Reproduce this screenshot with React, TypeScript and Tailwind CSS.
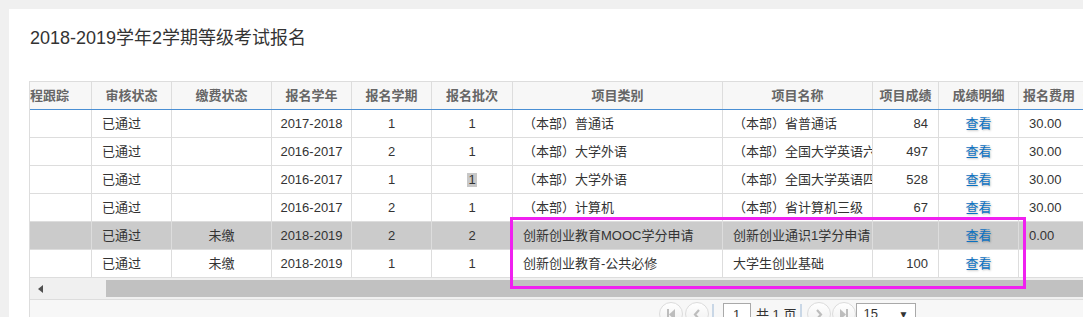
import React from 'react';

interface Row {
  audit: string;
  pay: string;
  year: string;
  term: string;
  batch: string;
  category: string;
  name: string;
  score: string;
  fee: string;
  selected?: boolean;
  markBatch?: boolean;
}

const rows: Row[] = [
  { audit: '已通过', pay: '', year: '2017-2018', term: '1', batch: '1', category: '（本部）普通话', name: '（本部）省普通话', score: '84', fee: '30.00' },
  { audit: '已通过', pay: '', year: '2016-2017', term: '2', batch: '1', category: '（本部）大学外语', name: '（本部）全国大学英语六级', score: '497', fee: '30.00' },
  { audit: '已通过', pay: '', year: '2016-2017', term: '1', batch: '1', category: '（本部）大学外语', name: '（本部）全国大学英语四级', score: '528', fee: '30.00', markBatch: true },
  { audit: '已通过', pay: '', year: '2016-2017', term: '2', batch: '1', category: '（本部）计算机', name: '（本部）省计算机三级', score: '67', fee: '30.00' },
  { audit: '已通过', pay: '未缴', year: '2018-2019', term: '2', batch: '2', category: '创新创业教育MOOC学分申请', name: '创新创业通识1学分申请', score: '', fee: '0.00', selected: true },
  { audit: '已通过', pay: '未缴', year: '2018-2019', term: '1', batch: '1', category: '创新创业教育-公共必修', name: '大学生创业基础', score: '100', fee: '' },
];

const cell = 'h-full shrink-0 border-r border-[#dddddd] flex items-center overflow-hidden whitespace-nowrap';

function PagerButton({ children }: { children: React.ReactNode }) {
  return (
    <div className="w-[24px] h-[24px] rounded-full border border-[#dcdcdc] bg-gradient-to-b from-white to-[#efefef] flex items-center justify-center shrink-0">
      {children}
    </div>
  );
}

export default function App() {
  return (
    <div
      className="w-[1083px] h-[317px] overflow-hidden bg-[#f0f0f0] pl-[9px] pt-[9px] text-[#333333]"
      style={{ fontFamily: '"Liberation Sans", "Noto Sans CJK SC", sans-serif' }}
    >
      <div className="bg-white h-[308px] pl-[20px] pt-[17px] overflow-hidden">
        <h1 className="text-[18px] leading-[24px] pl-[1px] text-[#333333]">2018-2019学年2学期等级考试报名</h1>

        <div className="relative mt-[31px] w-[1120px] border-l border-t border-[#dddddd] text-[13px]">
          {/* header */}
          <div className="flex h-[28px] bg-[#f7f7f7] border-b border-[#4a8fd4] text-[#666666] font-bold">
            <div className={`${cell} w-[62px]`}>程跟踪</div>
            <div className={`${cell} w-[80px] justify-center`}>审核状态</div>
            <div className={`${cell} w-[100px] justify-center`}>缴费状态</div>
            <div className={`${cell} w-[80px] justify-center`}>报名学年</div>
            <div className={`${cell} w-[80px] justify-center`}>报名学期</div>
            <div className={`${cell} w-[81px] justify-center`}>报名批次</div>
            <div className={`${cell} w-[210px] justify-center`}>项目类别</div>
            <div className={`${cell} w-[150px] justify-center`}>项目名称</div>
            <div className={`${cell} w-[66px] justify-center`}>项目成绩</div>
            <div className={`${cell} w-[80px] justify-center`}>成绩明细</div>
            <div className={`${cell} w-[120px] pl-[4px]`}>报名费用（元）</div>
          </div>

          {/* body */}
          {rows.map((r, i) => (
            <div key={i} className={`flex h-[28px] border-b border-[#dddddd] ${r.selected ? 'bg-[#cbcbcb]' : 'bg-white'}`}>
              <div className={`${cell} w-[62px]`} />
              <div className={`${cell} w-[80px] pl-[10px]`}>{r.audit}</div>
              <div className={`${cell} w-[100px] justify-center`}>{r.pay}</div>
              <div className={`${cell} w-[80px] justify-center`}>{r.year}</div>
              <div className={`${cell} w-[80px] justify-center`}>{r.term}</div>
              <div className={`${cell} w-[81px] justify-center`}>
                {r.markBatch ? <span className="bg-[#c8c8c8] leading-[14px] px-[1px]">{r.batch}</span> : r.batch}
              </div>
              <div className={`${cell} w-[210px] pl-[10px]`}>{r.category}</div>
              <div className={`${cell} w-[150px] pl-[10px]`}>{r.name}</div>
              <div className={`${cell} w-[66px] justify-end pr-[10px]`}>{r.score}</div>
              <div className={`${cell} w-[80px] justify-center`}>
                <span className="text-[#0b71c2] [text-shadow:1px_1px_2px_rgba(0,0,0,0.25)]">查看</span>
              </div>
              <div className={`${cell} w-[120px] pl-[10px]`}>{r.fee}</div>
            </div>
          ))}

          {/* horizontal scrollbar */}
          <div className="flex h-[22px] bg-[#f0f0f0] border-b border-[#dddddd] items-center">
            <div className="w-[76px] h-full flex items-center pl-[8px] shrink-0">
              <svg width="6" height="8" viewBox="0 0 6 8">
                <polygon points="5,0 5,8 0,4" fill="#505050" />
              </svg>
            </div>
            <div className="flex-1 h-[17px] bg-[#c1c1c1]" />
          </div>

          {/* pager */}
          <div className="h-[40px] bg-[#f7f7f7] pt-[2px] pl-[629px] flex items-start text-[13px] text-[#333333]">
            <PagerButton>
              <svg width="10" height="11" viewBox="0 0 10 11">
                <rect x="1" y="0" width="2" height="11" fill="#bdbdbd" />
                <polygon points="9,0 9,11 3,5.5" fill="#bdbdbd" />
              </svg>
            </PagerButton>
            <div className="ml-[2px]">
              <PagerButton>
                <svg width="8" height="11" viewBox="0 0 8 11">
                  <polyline points="6,1 2,5.5 6,10" fill="none" stroke="#bdbdbd" strokeWidth="2.2" />
                </svg>
              </PagerButton>
            </div>
            <div className="w-[2px] h-[18px] bg-[#c9d7e6] ml-[3px] mt-[2px]" />
            <div className="ml-[9px] w-[28px] h-[22px] border border-[#a9a9a9] bg-white pl-[9px] leading-[22px] mt-[1px]">1</div>
            <div className="ml-[5px] leading-[26px]">共 1 页</div>
            <div className="w-[2px] h-[18px] bg-[#c9d7e6] ml-[4px] mt-[2px]" />
            <div className="ml-[5px]">
              <PagerButton>
                <svg width="8" height="11" viewBox="0 0 8 11">
                  <polyline points="2,1 6,5.5 2,10" fill="none" stroke="#bdbdbd" strokeWidth="2.2" />
                </svg>
              </PagerButton>
            </div>
            <div className="ml-[1px]">
              <PagerButton>
                <svg width="10" height="11" viewBox="0 0 10 11">
                  <polygon points="1,0 1,11 7,5.5" fill="#bdbdbd" />
                  <rect x="7" y="0" width="2" height="11" fill="#bdbdbd" />
                </svg>
              </PagerButton>
            </div>
            <div className="ml-[0px] w-[60px] h-[22px] border border-[#a9a9a9] bg-white flex items-center justify-between pl-[6px] pr-[7px] mt-[1px]">
              <span>15</span>
              <span className="text-[10px] text-[#333333]">▼</span>
            </div>
          </div>

          {/* annotation box */}
          <div className="absolute left-[480px] top-[135px] w-[516px] h-[72px] border-[3px] border-[#f020f0] pointer-events-none" />
        </div>
      </div>
    </div>
  );
}
